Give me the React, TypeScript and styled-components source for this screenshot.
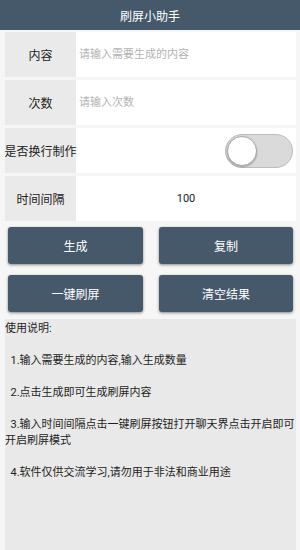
import React, { useState } from "react"
import styled, { createGlobalStyle } from "styled-components"

const GlobalStyle = createGlobalStyle`
  html, body {
    margin: 0;
    padding: 0;
    background: #f6f6f6;
    font-family: Roboto, "Noto Sans CJK SC", sans-serif;
  }
  * {
    box-sizing: border-box;
  }
`

const Page = styled.div`
  width: 300px;
  height: 550px;
  display: flex;
  flex-direction: column;
  overflow: hidden;
`

const Header = styled.header`
  height: 30px;
  flex-shrink: 0;
  background: #46596b;
  color: #fff;
  font-size: 12px;
  display: flex;
  align-items: center;
  justify-content: center;
`

const Form = styled.div`
  display: flex;
  flex-direction: column;
  gap: 3px;
  padding: 2px 4px 0 5px;
`

const Row = styled.div`
  display: flex;
  height: 45px;
  background: #fff;
`

const Label = styled.div`
  width: 71px;
  flex-shrink: 0;
  background: #eaeaea;
  color: #222;
  font-size: 12px;
  display: flex;
  align-items: center;
  justify-content: center;
  white-space: nowrap;
`

const Field = styled.input<{ $center?: boolean }>`
  flex: 1;
  min-width: 0;
  border: none;
  outline: none;
  background: #fff;
  padding: 0 3px;
  font-family: inherit;
  font-size: 11px;
  color: #222;
  text-align: ${(p) => (p.$center ? "center" : "left")};

  &::placeholder {
    color: #b3b3b3;
  }
`

const SwitchCell = styled.div`
  flex: 1;
  display: flex;
  align-items: center;
  justify-content: flex-end;
  padding-right: 3px;
`

const Track = styled.div<{ $on: boolean }>`
  width: 68px;
  height: 34px;
  border-radius: 17px;
  background: ${(p) => (p.$on ? "#7c90a2" : "#dadada")};
  border: 1px solid #bdbdbd;
  display: flex;
  align-items: center;
  justify-content: ${(p) => (p.$on ? "flex-end" : "flex-start")};
  padding: 0 1px;
  cursor: pointer;
`

const Knob = styled.div`
  width: 30px;
  height: 30px;
  border-radius: 50%;
  background: #fff;
  border: 1.5px solid #a9a9a9;
  box-shadow: 0 1px 2px rgba(0, 0, 0, 0.3);
`

const Buttons = styled.div`
  display: grid;
  grid-template-columns: 135px 134px;
  column-gap: 16px;
  row-gap: 11px;
  padding: 6px 0 0 8px;
`

const Button = styled.button`
  height: 37px;
  border: none;
  border-radius: 3px;
  background: #46596b;
  color: #fff;
  font-family: inherit;
  font-size: 12px;
  box-shadow: 0 1px 3px rgba(0, 0, 0, 0.45);
  cursor: pointer;
`

const Notes = styled.div`
  flex: 1;
  margin: 7px 4px 0 5px;
  background: #e9e9e9;
  color: #1e1e1e;
  font-size: 11px;
  line-height: 16px;
  padding-top: 2px;
  white-space: pre-wrap;
`

const notes = `使用说明:

  1.输入需要生成的内容,输入生成数量

  2.点击生成即可生成刷屏内容

  3.输入时间间隔点击一键刷屏按钮打开聊天界点击开启即可开启刷屏模式

  4.软件仅供交流学习,请勿用于非法和商业用途`

export default function App() {
  const [wrap, setWrap] = useState(false)

  return (
    <Page>
      <GlobalStyle />
      <Header>刷屏小助手</Header>
      <Form>
        <Row>
          <Label>内容</Label>
          <Field placeholder="请输入需要生成的内容" />
        </Row>
        <Row>
          <Label>次数</Label>
          <Field placeholder="请输入次数" />
        </Row>
        <Row>
          <Label>是否换行制作</Label>
          <SwitchCell>
            <Track $on={wrap} onClick={() => setWrap(!wrap)}>
              <Knob />
            </Track>
          </SwitchCell>
        </Row>
        <Row>
          <Label>时间间隔</Label>
          <Field $center defaultValue="100" />
        </Row>
      </Form>
      <Buttons>
        <Button>生成</Button>
        <Button>复制</Button>
        <Button>一键刷屏</Button>
        <Button>清空结果</Button>
      </Buttons>
      <Notes>{notes}</Notes>
    </Page>
  )
}
